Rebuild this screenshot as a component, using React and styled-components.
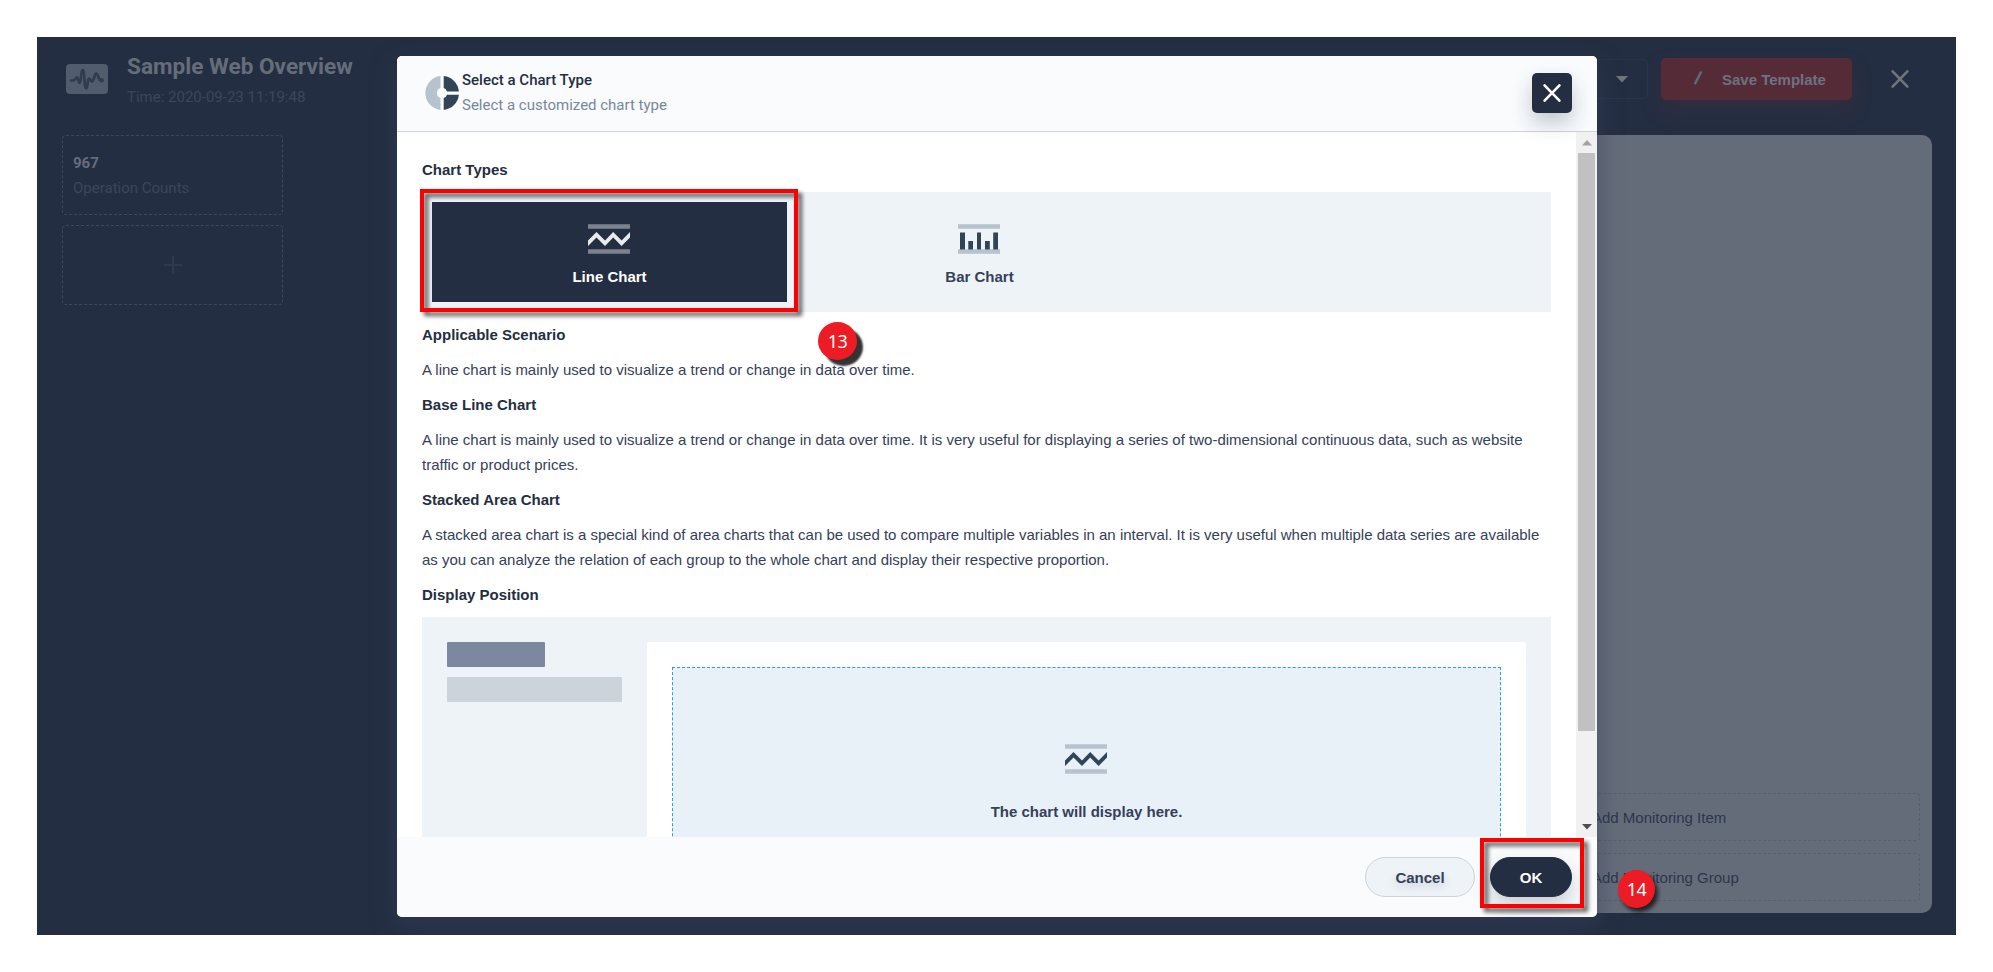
import React from "react";
import styled, { createGlobalStyle } from "styled-components";

const Global = createGlobalStyle`
  * { box-sizing: border-box; }
  body { margin: 0; background: #fff; font-family: "Liberation Sans", Arial, sans-serif; font-size: 15px; color: #35405a; }
  p, h1, h2, h3 { margin: 0; }
`;
const roboto = `font-family: Roboto, sans-serif;`;

const Page = styled.div`position: relative; width: 1993px; height: 972px; padding: 37px; overflow: hidden;`;
const Window = styled.div`width: 1919px; height: 898px; background: #242e42; overflow: hidden; display: flex; flex-direction: column; position: relative;`;
const TopBar = styled.header`height: 98px; flex: none; display: flex; align-items: flex-start; padding: 0 47px 0 29px;`;
const LogoBox = styled.div`margin-top: 27px; height: 30px;`;
const TitleBlock = styled.div`margin: 15px 0 0 19px; flex: 1; ${roboto}`;
const PageTitle = styled.h1`font-size: 22.6px; line-height: 30px; font-weight: 700; color: #666d7a;`;
const PageTime = styled.p`font-size: 15px; line-height: 20px; margin-top: 5px; color: #3b465b; white-space: nowrap;`;
const Dropdown = styled.div`width: 100px; height: 40px; margin: 22px 13px 0 0; border: 1px solid #2a3548; border-radius: 5px; display: flex; align-items: center; justify-content: flex-end; padding-right: 19px;`;
const SaveButton = styled.div`width: 191px; height: 42px; margin: 21px 39px 0 0; background: #562b38; border-radius: 5px; box-shadow: 0 10px 20px rgba(86,43,56,.3); display: flex; align-items: center; padding-left: 31px; gap: 19px; color: #6d7280; font-weight: 700; white-space: nowrap;`;
const TopClose = styled.div`margin-top: 33px; height: 18px;`;
const Main = styled.div`display: flex; flex: 1; padding: 0 24px 22px 25px; gap: 130px;`;
const Side = styled.div`width: 221px; display: flex; flex-direction: column; gap: 10px; ${roboto}`;
const Card = styled.div`height: 80px; border: 1px dashed #3e485c; border-radius: 4px; padding: 15px 10px; line-height: 25px; color: #3b465b; ${p => p.$empty && "display:flex;align-items:center;justify-content:center;"}`;
const Count = styled.div`font-weight: 700; color: #666d7a;`;
const Panel = styled.div`flex: 1; background: #656c79; border-radius: 10px; display: flex; flex-direction: column; justify-content: flex-end; gap: 12px; padding: 12px;`;
const AddRow = styled.div`height: 48px; border: 1px dashed #566170; border-radius: 4px; display: flex; align-items: center; padding-left: 1166px; color: #2c364b; white-space: nowrap;`;

const Modal = styled.section`position: absolute; left: 397px; top: 56px; width: 1200px; height: 861px; border-radius: 5px; background: #fff; overflow: hidden; display: flex; flex-direction: column;`;
const ModalShadow = styled.div`position: absolute; left: 360px; top: 19px; width: 1200px; height: 861px; border-radius: 5px; box-shadow: 0 10px 25px rgba(52,64,90,.6);`;
const ModalHead = styled.header`height: 76px; flex: none; background: #f9fbfd; border-bottom: 1px solid #ccd3db; display: flex; padding: 17px 25px 0 28px;`;
const PieBox = styled.div`width: 34px; margin: 3px 3px 0 0;`;
const HeadText = styled.div`flex: 1; line-height: 25px; margin-top: -5px; color: #79879c; ${roboto}`;
const HeadTitle = styled.h2`font-size: 15px; line-height: 25px; font-weight: 500; color: #242e42;`;
const CloseButton = styled.div`width: 40px; height: 40px; border-radius: 5px; background: #242e42; display: flex; align-items: center; justify-content: center; box-shadow: 0 10px 20px rgba(36,46,66,.25);`;
const ModalBody = styled.div`height: 705px; flex: none; display: flex; overflow: hidden;`;
const Content = styled.div`flex: 1; padding: 25px 25px 0; line-height: 25px;`;
const Heading = styled.h3`font-size: 15px; line-height: 25px; font-weight: 700; color: #242e42; margin-bottom: 10px;`;
const Text = styled.p`margin-bottom: 10px; white-space: nowrap;`;
const Types = styled.div`height: 120px; background: #eef3f8; padding: 10px; display: flex; gap: 15px; margin-bottom: 10px;`;
const Tile = styled.div`width: 355px; height: 100px; display: flex; flex-direction: column; align-items: center; padding-top: 22px; gap: 10px; font-weight: 700; background: ${p => (p.$active ? "#242e42" : "transparent")}; color: ${p => (p.$active ? "#fff" : "#35405a")}; svg { flex: none; margin-right: 1px; }`;
const Preview = styled.div`height: 360px; background: #eef3f8; padding: 25px 25px 0; display: flex; gap: 25px;`;
const PreviewSide = styled.div`width: 175px; display: flex; flex-direction: column; gap: 10px;`;
const Bar = styled.div`height: 25px; border-radius: 1px; width: ${p => p.$w}px; background: ${p => p.$c};`;
const PreviewPanel = styled.div`flex: 1; background: #fff; padding: 25px 25px 0;`;
const DropArea = styled.div`height: 260px; border: 1px dashed #329dce; background: #e8f0f8; display: flex; flex-direction: column; align-items: center; padding-top: 76px; gap: 25px; font-weight: 700; svg { margin-right: 1px; }`;
const Scroll = styled.div`width: 21px; background: #f1f1f1; display: flex; flex-direction: column; align-items: center; justify-content: space-between; padding: 0 2px;`;
const ScrollArrow = styled.div`height: 21px; display: flex; align-items: center;`;
const Thumb = styled.div`width: 17px; height: 578px; background: #c1c1c1; margin-bottom: auto;`;
const Foot = styled.footer`height: 80px; background: #f9fbfd; display: flex; justify-content: flex-end; gap: 15px; padding: 20px 25px;`;
const Pill = styled.div`height: 40px; width: ${p => (p.$dark ? 82 : 110)}px; border-radius: 20px; display: flex; align-items: center; justify-content: center; font-weight: 700; background: ${p => (p.$dark ? "#242e42" : "#eef3f8")}; color: ${p => (p.$dark ? "#fff" : "#35405a")}; border: 1px solid ${p => (p.$dark ? "#242e42" : "#ccd3db")}; ${p => (p.$dark ? "box-shadow: 0 10px 20px rgba(36,46,66,.22);" : "text-shadow: 0 4px 8px rgba(36,46,66,.2);")}`;

const Mark = styled.div`position: absolute; left: ${p => p.$x}px; top: ${p => p.$y}px; width: ${p => p.$w}px; height: ${p => p.$h}px; border: 4px solid #f00; filter: drop-shadow(4px 4px 2px rgba(0,0,0,.65));`;
const Badge = styled.div`position: absolute; left: ${p => p.$x}px; top: ${p => p.$y}px; width: ${p => p.$w}px; height: 38px; border-radius: 50%; background: #ed1c24; color: #fff; font: 18px/38px "Noto Sans", sans-serif; letter-spacing: -.6px; text-align: center; box-shadow: ${p => p.$s};`;

const Cross = ({ color }) => (
  <svg width="18" height="18" viewBox="0 0 18 18" stroke={color} strokeWidth="2.6" strokeLinecap="round"><path d="M1.6 1.4 16.4 16.6M16.4 1.4 1.6 16.6" /></svg>
);
const LineIcon = ({ bar, line }) => (
  <svg width="42" height="30" viewBox="0 0 42 30"><path d="M0 .3H42V4.8H0zM0 25.3H42V29.8H0z" fill={bar} /><path d="M0 16.500 8.500 8 17 16.500 25.200 8 33.600 16.500 42 8V13.600L33.600 22 25.200 13.600 17 22 8.500 13.600 0 22z" fill={line} /></svg>
);
const BarIcon = () => (
  <svg width="42" height="30" viewBox="0 0 42 30"><path d="M0 .3H42V4.8H0zM0 25.3H42V29.8H0z" fill="#b6c2cd" /><path d="M2 8.500H7V25.500H2zM10.300 17H15V25.500H10.300zM19 8.500H23V25.500H19zM27 17H31.800V25.500H27zM35.200 8.500H40V25.500H35.200z" fill="#324558" /></svg>
);

export default function App() {
  return (
    <Page>
      <Global />
      <Window>
        <TopBar>
          <LogoBox>
            <svg width="42" height="30" viewBox="0 0 42 30"><rect width="42" height="30" rx="4" fill="#515c6c" /><path d="M5 16.500h2.200C9.500 16.500 9.500 13.500 11 13.500s1.200 5.500 2.700 5.500C15.500 19 14.500 6 16.700 6s1.300 18.300 3.400 18.300S21 14.500 23 14.500s1 3 2.700 3C28.500 17.500 28 9.500 30.200 9.500s1.300 6.800 5 6.800" fill="none" stroke="#303c4f" strokeWidth="2.700" strokeLinecap="round" /><circle cx="35.700" cy="16.300" r="2.200" fill="#303c4f" /></svg>
          </LogoBox>
          <TitleBlock>
            <PageTitle>Sample Web Overview</PageTitle>
            <PageTime>Time: 2020-09-23 11:19:48</PageTime>
          </TitleBlock>
          <Dropdown><svg width="12" height="7"><path d="M0 0H12L6 6.500z" fill="#70757f" /></svg></Dropdown>
          <SaveButton>
            <svg width="11" height="18" viewBox="0 0 11 18"><path d="M9.300 1.500 2.600 14.500" stroke="#5f6c7c" strokeWidth="2.400" /><path d="M2.600 14 1.200 17" stroke="#3f3445" strokeWidth="2" /></svg>
            Save Template
          </SaveButton>
          <TopClose><Cross color="#70757f" /></TopClose>
        </TopBar>
        <Main>
          <Side>
            <Card><Count>967</Count>Operation Counts</Card>
            <Card $empty><svg width="18" height="18"><path d="M9 0V18M0 9H18" stroke="#2e394c" strokeWidth="2" /></svg></Card>
          </Side>
          <Panel>
            <AddRow>Add Monitoring Item</AddRow>
            <AddRow>Add Monitoring Group</AddRow>
          </Panel>
        </Main>
        <ModalShadow />
      </Window>
      <Modal>
        <ModalHead>
          <PieBox>
            <svg width="34" height="34" viewBox="0 0 34 34"><path d="M15.500 .1A17 17 0 0 0 15.500 33.900V22A5.300 5.300 0 0 1 15.500 12z" fill="#b6c2cd" /><path d="M18.700 .1A17 17 0 0 1 33.900 15.500H22A5.300 5.300 0 0 0 18.700 12zM33.900 18.700A17 17 0 0 1 18.700 33.900V22A5.300 5.300 0 0 0 22 18.700z" fill="#324558" /></svg>
          </PieBox>
          <HeadText><HeadTitle>Select a Chart Type</HeadTitle>Select a customized chart type</HeadText>
          <CloseButton><Cross color="#fff" /></CloseButton>
        </ModalHead>
        <ModalBody>
          <Content>
            <Heading>Chart Types</Heading>
            <Types>
              <Tile $active><LineIcon bar="#7c828e" line="#e9eaec" />Line Chart</Tile>
              <Tile><BarIcon />Bar Chart</Tile>
            </Types>
            <Heading>Applicable Scenario</Heading>
            <Text>A line chart is mainly used to visualize a trend or change in data over time.</Text>
            <Heading>Base Line Chart</Heading>
            <Text>A line chart is mainly used to visualize a trend or change in data over time. It is very useful for displaying a series of two-dimensional continuous data, such as website<br />traffic or product prices.</Text>
            <Heading>Stacked Area Chart</Heading>
            <Text>A stacked area chart is a special kind of area charts that can be used to compare multiple variables in an interval. It is very useful when multiple data series are available<br />as you can analyze the relation of each group to the whole chart and display their respective proportion.</Text>
            <Heading>Display Position</Heading>
            <Preview>
              <PreviewSide><Bar $w={98} $c="#7c889f" /><Bar $w={175} $c="#ccd3db" /></PreviewSide>
              <PreviewPanel>
                <DropArea><LineIcon bar="#b6c2cd" line="#324558" />The chart will display here.</DropArea>
              </PreviewPanel>
            </Preview>
          </Content>
          <Scroll>
            <ScrollArrow><svg width="10" height="6"><path d="M0 5.500H10L5 0z" fill="#a3a3a3" /></svg></ScrollArrow>
            <Thumb />
            <ScrollArrow><svg width="10" height="6"><path d="M0 0H10L5 5.500z" fill="#505050" /></svg></ScrollArrow>
          </Scroll>
        </ModalBody>
        <Foot><Pill>Cancel</Pill><Pill $dark>OK</Pill></Foot>
      </Modal>
      <Mark $x={420} $y={189} $w={378} $h={123} />
      <Mark $x={1480} $y={838} $w={104} $h={70} />
      <Badge $x={818} $y={322} $w={39} $s="6px 6px 2px #333">13</Badge>
      <Badge $x={1618} $y={870} $w={37} $s="3px 4px 4px rgba(0,0,0,.7)">14</Badge>
    </Page>
  );
}
